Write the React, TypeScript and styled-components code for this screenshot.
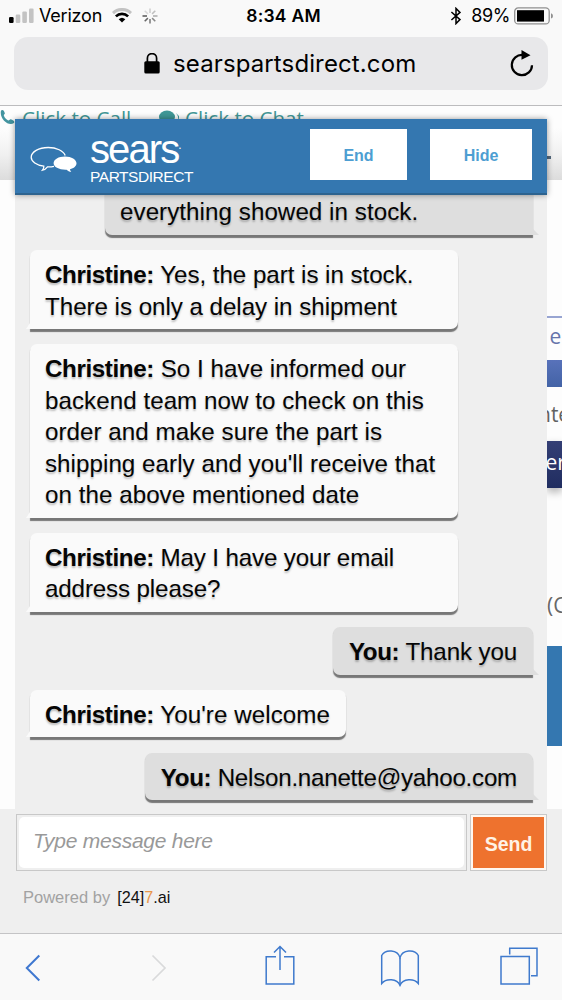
import styled, { createGlobalStyle } from "styled-components";

type Message = {
  id: number;
  from?: string;
  text: string;
  mine?: boolean;
  wide?: boolean;
  tracking?: number;
};

const messages: Message[] = [
  { id: 1, text: "everything showed in stock.", mine: true, wide: true, tracking: 0.04 },
  {
    id: 2,
    from: "Christine:",
    text: "Yes, the part is in stock.\nThere is only a delay in shipment",
    wide: true,
    tracking: -0.05,
  },
  {
    id: 3,
    from: "Christine:",
    text: "So I have informed our\nbackend team now to check on this\norder and make sure the part is\nshipping early and you'll receive that\non the above mentioned date",
    wide: true,
    tracking: 0.03,
  },
  {
    id: 4,
    from: "Christine:",
    text: "May I have your email\naddress please?",
    wide: true,
    tracking: -0.15,
  },
  { id: 5, from: "You:", text: "Thank you", mine: true, tracking: -0.15 },
  { id: 6, from: "Christine:", text: "You're welcome", tracking: 0.05 },
  { id: 7, from: "You:", text: "Nelson.nanette@yahoo.com", mine: true, tracking: -0.26 },
];

function SignalIcon(): JSX.Element {
  return (
    <svg width="34" height="16" viewBox="0 0 34 16">
      <rect x="1" y="9" width="4.6" height="6" rx="1.2" fill="#000" />
      <rect x="7.7" y="6.5" width="4.6" height="8.5" rx="1.2" fill="#c3c3c3" />
      <rect x="14.3" y="3.5" width="4.6" height="11.5" rx="1.2" fill="#c3c3c3" />
      <rect x="21" y="0.5" width="4.6" height="14.5" rx="1.2" fill="#c3c3c3" />
    </svg>
  );
}

function WifiIcon(): JSX.Element {
  return (
    <svg width="20" height="15" viewBox="0 0 20 15">
      <path d="M1 5.1a13 13 0 0 1 18 0" fill="none" stroke="#c3c3c3" strokeWidth="3" />
      <path d="M3.9 8.4a8.8 8.8 0 0 1 12.2 0" fill="none" stroke="#000" strokeWidth="2.7" />
      <path d="M6.7 11.2a4.8 4.8 0 0 1 6.6 0L10 14.6z" fill="#000" />
    </svg>
  );
}

const spokes = ["#555", "#d8d8d8", "#ccc", "#c0c0c0", "#aaa", "#888", "#777", "#666"];

function Spinner(): JSX.Element {
  return (
    <svg width="16" height="16" viewBox="0 0 16 16">
      {spokes.map((color, i) => (
        <path
          key={i}
          d="M8 0.500v4.500"
          stroke={color}
          strokeWidth="1.5"
          transform={`rotate(${i * 45 - 90} 8 8)`}
        />
      ))}
    </svg>
  );
}

function App(): JSX.Element {
  return (
    <Screen>
      <GlobalStyle />
      <BrowserBar>
        <StatusBar>
          <StatusSide>
            <SignalIcon />
            <Carrier>Verizon</Carrier>
            <WifiIcon />
            <SpinnerSlot>
              <Spinner />
            </SpinnerSlot>
          </StatusSide>
          <Clock>8:34 AM</Clock>
          <StatusSide $end>
            <svg width="12" height="18" viewBox="0 0 12 18">
              <path d="M1.4 5l8.6 7.6L6 16.6V1.4l4 4L1.4 13" fill="none" stroke="#000" strokeWidth="1.5" />
            </svg>
            <Percent>89%</Percent>
            <svg width="40" height="18" viewBox="0 0 40 18">
              <rect x="0.7" y="0.9" width="34.5" height="16" rx="3.5" fill="none" stroke="#909090" strokeWidth="1.3" />
              <rect x="3" y="3.2" width="27" height="11.4" fill="#000" />
              <path d="M37 6.2q2 .7 2 2.7t-2 2.7z" fill="#909090" />
            </svg>
          </StatusSide>
        </StatusBar>
        <AddressBar>
          <svg width="16" height="22" viewBox="0 0 16 22">
            <rect x="0.3" y="8.2" width="15.4" height="12.4" rx="1.5" fill="#000" />
            <path d="M3.4 9V5.200a4.600 4.600 0 0 1 9.200 0V9" fill="none" stroke="#000" strokeWidth="1.7" />
          </svg>
          <Address>searspartsdirect.com</Address>
          <Reload width="24" height="28" viewBox="0 0 24 28">
            <path d="M12.8 5A10.1 10.1 0 1 0 22 15.2" fill="none" stroke="#000" strokeWidth="2.2" />
            <path d="M11.5 0l9 5.2-9 4.6z" fill="#000" />
          </Reload>
        </AddressBar>
      </BrowserBar>

      <Viewport>
        <SiteTop>
          <svg width="16" height="16" viewBox="0 0 16 16">
            <path
              d="M1 1.5C3-.2 4.3 2 4.9 4.3c0 1-1.4 1.5-1 2.4.8 2 2.3 3.7 4.3 4.7.9.3 1.5-1.4 2.5-1.2 2.5.8 4.5 2 3.2 3.8C9 18-1 10 1 1.5z"
              fill="#4394a0"
            />
          </svg>
          <SiteLink>Click to Call</SiteLink>
          <svg width="20" height="16" viewBox="0 0 20 16">
            <ellipse cx="8" cy="8" rx="8" ry="6.5" fill="#3f9796" />
            <path d="M17 4q4 5 1 10l2 1V7z" fill="#3f9796" />
          </svg>
          <SiteLink>Click to Chat</SiteLink>
        </SiteTop>
        <SiteFade>
          <MenuEdge />
        </SiteFade>
        <SiteEdge>
          <FieldEdge>e</FieldEdge>
          <BlueEdge />
          <LabelEdge>nte</LabelEdge>
          <NavyEdge>
            <span>ter</span>
          </NavyEdge>
          <NoteEdge>(C</NoteEdge>
          <FooterEdge />
        </SiteEdge>
        <SiteBase />

        <ChatPanel>
          <ChatHeader>
            <ChatLogo width="48" height="28" viewBox="0 0 48 28">
              <path
                d="M24 20.3c-2.500.5-4.500.6-6.500.5-1.300 1.700-3 2.900-5 3.400 1.100-1.400 1.500-2.800 1.300-4C6.500 19.200 1.200 15.600 1.200 11.300 1.200 5.800 8.700 1.500 18.200 1.500c8.300 0 15.300 3.300 17 8"
                fill="none"
                stroke="#fff"
                strokeWidth="1.3"
              />
              <path
                d="M35 10.5c6.500 0 11.500 3 11.500 6.800 0 2.800-2.600 5-6.500 6 .1 1.200.6 2 1.400 2.800-2.200-.4-3.600-1.200-4.800-2.400-7.200.3-13-2.500-13-6.400s5-6.800 11.400-6.800z"
                fill="#fff"
              />
            </ChatLogo>
            <Brand>
              <BrandName>
                sears<Dot>.</Dot>
              </BrandName>
              <BrandSub>PARTSDIRECT</BrandSub>
            </Brand>
            <HeaderButton $width={97}>End</HeaderButton>
            <HeaderButton $width={102}>Hide</HeaderButton>
          </ChatHeader>
          <MessageList>
            {messages.map((message) => (
              <Bubble
                key={message.id}
                $mine={message.mine}
                $wide={message.wide}
                $tracking={message.tracking}
              >
                {message.from && <Sender>{message.from}</Sender>}
                {message.from && " "}
                {message.text}
              </Bubble>
            ))}
          </MessageList>
          <Composer>
            <InputFrame>
              <MessageInput placeholder="Type message here" />
            </InputFrame>
            <SendFrame>
              <SendButton>Send</SendButton>
            </SendFrame>
          </Composer>
          <Powered>
            Powered by
            <Vendor>
              [24]<Seven>7</Seven>.ai
            </Vendor>
          </Powered>
        </ChatPanel>
      </Viewport>

      <Toolbar>
        <svg width="16" height="28" viewBox="0 0 16 28">
          <path d="M14.3 1.5L1.8 14l12.5 12.5" fill="none" stroke="#3f78d0" strokeWidth="2" />
        </svg>
        <ForwardIcon width="16" height="28" viewBox="0 0 16 28">
          <path d="M1.5 1.5L14 14 1.5 26.5" fill="none" stroke="#d9dadb" strokeWidth="1.7" />
        </ForwardIcon>
        <ShareIcon width="30" height="42" viewBox="0 0 30 42">
          <path
            d="M11 12.7H1.2v27.2h27.6V12.7H19M15 26V2.500M9 8.500l6-6 6 6"
            fill="none"
            stroke="#3f7acd"
            strokeWidth="1.5"
          />
        </ShareIcon>
        <BookIcon width="40" height="38" viewBox="0 0 40 38">
          <path
            d="M20 8.500C17.500 0.500 5.500-.2 1.700 6.500v28C6 29.300 17 29.300 20 36.300 23 29.300 34 29.300 38.300 34.500v-28C34.500-.2 22.500.5 20 8.500z"
            fill="none"
            stroke="#3f7acd"
            strokeWidth="1.5"
          />
          <path d="M20 8.5v28" stroke="#3f7acd" strokeWidth="1.5" />
        </BookIcon>
        <TabsIcon width="38" height="38" viewBox="0 0 38 38">
          <path
            d="M1 9.500h28.300v27.600H1zM9.700 7.500V1.200H37v27.500h-6"
            fill="none"
            stroke="#3f7acd"
            strokeWidth="1.5"
          />
        </TabsIcon>
      </Toolbar>
    </Screen>
  );
}

export default App;

const GlobalStyle = createGlobalStyle`
  * {
    box-sizing: border-box;
  }

  body {
    margin: 0;
    background: #f9f9f9;
  }

  svg {
    display: block;
    flex-shrink: 0;
  }
`;

const Screen = styled.div`
  display: flex;
  flex-direction: column;
  width: 562px;
  height: 1000px;
  overflow: hidden;
  font-family: "Liberation Sans", Arial, sans-serif;
`;

const BrowserBar = styled.header`
  height: 106px;
  flex-shrink: 0;
  background: #f9f9f9;
  border-bottom: 1px solid #bcbcbe;
  font-family: Inter, sans-serif;
`;

const StatusBar = styled.div`
  display: grid;
  grid-template-columns: 1fr auto 1fr;
  align-items: center;
  height: 36px;
  padding: 0 8px 5px;
`;

const StatusSide = styled.div<{ $end?: boolean }>`
  display: flex;
  align-items: center;
  justify-content: ${({ $end }) => ($end ? "flex-end" : "flex-start")};
`;

const Carrier = styled.span`
  width: 73px;
  margin-left: -3px;
  font-size: 18px;
  letter-spacing: -0.2px;
`;

const SpinnerSlot = styled.span`
  margin-left: 10px;
`;

const Clock = styled.span`
  padding-left: 5px;
  font-size: 17.5px;
  font-weight: 600;
  letter-spacing: 0.25px;
`;

const Percent = styled.span`
  margin: 0 4px 0 9px;
  font-size: 18px;
  letter-spacing: -0.4px;
`;

const AddressBar = styled.div`
  display: flex;
  align-items: center;
  height: 53px;
  margin: 1px 14px 0;
  padding: 0 14px 0 130px;
  border-radius: 14px;
  background: #e8e8ea;
`;

const Address = styled.span`
  margin-left: 13px;
  font-size: 24px;
  letter-spacing: 0.12px;
`;

const Reload = styled.svg`
  margin-left: auto;
`;

const Viewport = styled.main`
  position: relative;
  display: flex;
  flex-direction: column;
  height: 827px;
  flex-shrink: 0;
  overflow: hidden;
  background: #fdfdfd;
`;

const SiteTop = styled.div`
  display: flex;
  height: 22px;
  padding-top: 3px;
`;

const SiteLink = styled.span`
  width: 143px;
  padding-left: 6px;
  color: #429797;
  font-family: "Open Sans", sans-serif;
  font-size: 20.6px;
  line-height: 19px;
  white-space: nowrap;
`;

const SiteFade = styled.div`
  display: flex;
  justify-content: flex-end;
  height: 52px;
  padding: 28px 11px 0;
  background: linear-gradient(#fdfdfd, #f1f1f1 50%, #dcdcdc);
`;

const MenuEdge = styled.span`
  width: 5px;
  height: 3px;
  background: #53687c;
`;

const SiteEdge = styled.div`
  display: flex;
  flex-direction: column;
  width: 15px;
  height: 629px;
  margin-left: auto;
  overflow: hidden;
  font-family: "Open Sans", sans-serif;
  font-size: 21px;
  white-space: nowrap;
`;

const FieldEdge = styled.span`
  height: 44px;
  margin-top: 136px;
  padding-left: 2.5px;
  border-top: 2px solid #98a5d2;
  color: #6674aa;
  line-height: 36px;
`;

const BlueEdge = styled.span`
  height: 27px;
  background: linear-gradient(#5872ba, #4363a6);
`;

const LabelEdge = styled.span`
  height: 54px;
  margin-left: -9px;
  color: #626262;
  font-weight: 500;
  line-height: 54px;
`;

const NavyEdge = styled.span`
  height: 47px;
  background: linear-gradient(#343f75, #202d60);
  box-shadow: 0 4px 8px rgba(0, 0, 0, 0.3);
  color: #fff;
  line-height: 43px;

  span {
    margin-left: -9px;
  }
`;

const NoteEdge = styled.span`
  height: 30px;
  margin-top: 102px;
  color: #686868;
  line-height: 30px;
`;

const FooterEdge = styled.span`
  height: 100px;
  margin-top: 26px;
  background: #3477b0;
`;

const SiteBase = styled.div`
  flex: 1;
  background: #efefef;
`;

/* The chat floats over the site and leaves a thin margin on both sides */
const ChatPanel = styled.section`
  position: absolute;
  top: 13px;
  right: 15px;
  bottom: 0;
  left: 15px;
  display: flex;
  flex-direction: column;
  background: #efefef;
`;

const ChatHeader = styled.div`
  position: relative;
  z-index: 1;
  display: flex;
  align-items: center;
  height: 76px;
  flex-shrink: 0;
  padding: 0 15px;
  background: #3477b0;
  border-bottom: 2px solid #2d638f;
  box-shadow: 0 0 6px rgba(0, 0, 0, 0.4);
`;

const ChatLogo = styled.svg`
  margin-top: 7px;
`;

const Brand = styled.div`
  display: flex;
  flex-direction: column;
  width: 198px;
  margin-left: 12px;
  padding-top: 2px;
  color: #fff;
`;

const BrandName = styled.span`
  padding-top: 2px;
  font-size: 40px;
  letter-spacing: -1.9px;
  line-height: 37px;
`;

const Dot = styled.sup`
  font-size: 12px;
  line-height: 0;
`;

const BrandSub = styled.span`
  font-size: 15.5px;
  letter-spacing: -0.45px;
  line-height: 17px;
`;

const HeaderButton = styled.button<{ $width: number }>`
  width: ${({ $width }) => $width}px;
  height: 51px;
  flex-shrink: 0;
  margin: 0 0 4px 23px;
  padding: 3px 0 0;
  border: 0;
  background: #fff;
  color: #4d9ed2;
  font-family: "Liberation Sans", Arial, sans-serif;
  font-size: 16px;
  font-weight: 700;
`;

const MessageList = styled.div`
  display: flex;
  flex: 1;
  flex-direction: column;
  justify-content: flex-end;
  gap: 15.2px;
  min-height: 0;
  padding: 0 14.5px 14px;
  overflow: hidden;
`;

const Bubble = styled.div<{ $mine?: boolean; $wide?: boolean; $tracking?: number }>`
  position: relative;
  flex-shrink: 0;
  align-self: ${({ $mine }) => ($mine ? "flex-end" : "flex-start")};
  width: ${({ $wide }) => ($wide ? "428px" : "auto")};
  padding: 9px 15.5px 7px;
  border-radius: ${({ $mine }) => ($mine ? "7px 7px 0 7px" : "7px 7px 7px 0")};
  background: ${({ $mine }) => ($mine ? "#dedede" : "#fafafa")};
  box-shadow: 0 2.5px 1px #777;
  color: #050505;
  font-size: 24.2px;
  letter-spacing: ${({ $tracking = 0 }) => $tracking}px;
  line-height: 31.5px;
  text-shadow: 0 2px 2px rgba(0, 0, 0, 0.25);
  white-space: pre;

  &::after {
    content: "";
    position: absolute;
    bottom: 0;
    ${({ $mine }) => ($mine ? "right: -6px;" : "left: -4px;")}
    border-bottom: 6px solid ${({ $mine }) => ($mine ? "#dedede" : "#fafafa")};
    ${({ $mine }) =>
      $mine ? "border-right: 6px solid transparent;" : "border-left: 4px solid transparent;"}
  }
`;

const Sender = styled.strong`
  letter-spacing: -0.4px;
`;

const Composer = styled.div`
  display: flex;
  height: 57px;
  flex-shrink: 0;
  gap: 3px;
  padding-left: 1px;
`;

const InputFrame = styled.div`
  width: 451px;
  padding: 2px;
  border: 1px solid #c8c8c8;
`;

const MessageInput = styled.input`
  width: 100%;
  height: 100%;
  padding: 0 14px 3px;
  border: 0;
  border-radius: 5px;
  background: #fff;
  font-family: "Liberation Sans", Arial, sans-serif;
  font-size: 21px;
  letter-spacing: -0.25px;

  &::placeholder {
    color: #999;
    font-style: italic;
    opacity: 1;
  }
`;

const SendFrame = styled.div`
  width: 77px;
  padding: 2px;
  border: 1px solid #c8c8c8;
  background: #fff7f0;
`;

const SendButton = styled.button`
  width: 100%;
  height: 100%;
  padding: 3px 0 0;
  border: 0;
  background: #ee722e;
  color: #fff3e6;
  font-family: "Liberation Sans", Arial, sans-serif;
  font-size: 19.5px;
  font-weight: 700;
`;

const Powered = styled.div`
  height: 62px;
  flex-shrink: 0;
  padding: 16px 0 0 8px;
  color: #a2a2a2;
  font-size: 16.5px;
  line-height: 20px;
`;

const Vendor = styled.span`
  margin-left: 7px;
  color: #111;
  font-size: 16.2px;
`;

const Seven = styled.span`
  color: #e8964a;
`;

const Toolbar = styled.nav`
  display: flex;
  align-items: center;
  height: 67px;
  flex-shrink: 0;
  padding: 2px 0 0 25px;
  border-top: 1px solid #c4c4c6;
  background: #f9f9f9;
`;

const ForwardIcon = styled.svg`
  margin-left: 110px;
`;

const ShareIcon = styled.svg`
  margin: 0 0 7px 98px;
`;

const BookIcon = styled.svg`
  margin-left: 85px;
`;

const TabsIcon = styled.svg`
  margin: 0 0 4px 80px;
`;
